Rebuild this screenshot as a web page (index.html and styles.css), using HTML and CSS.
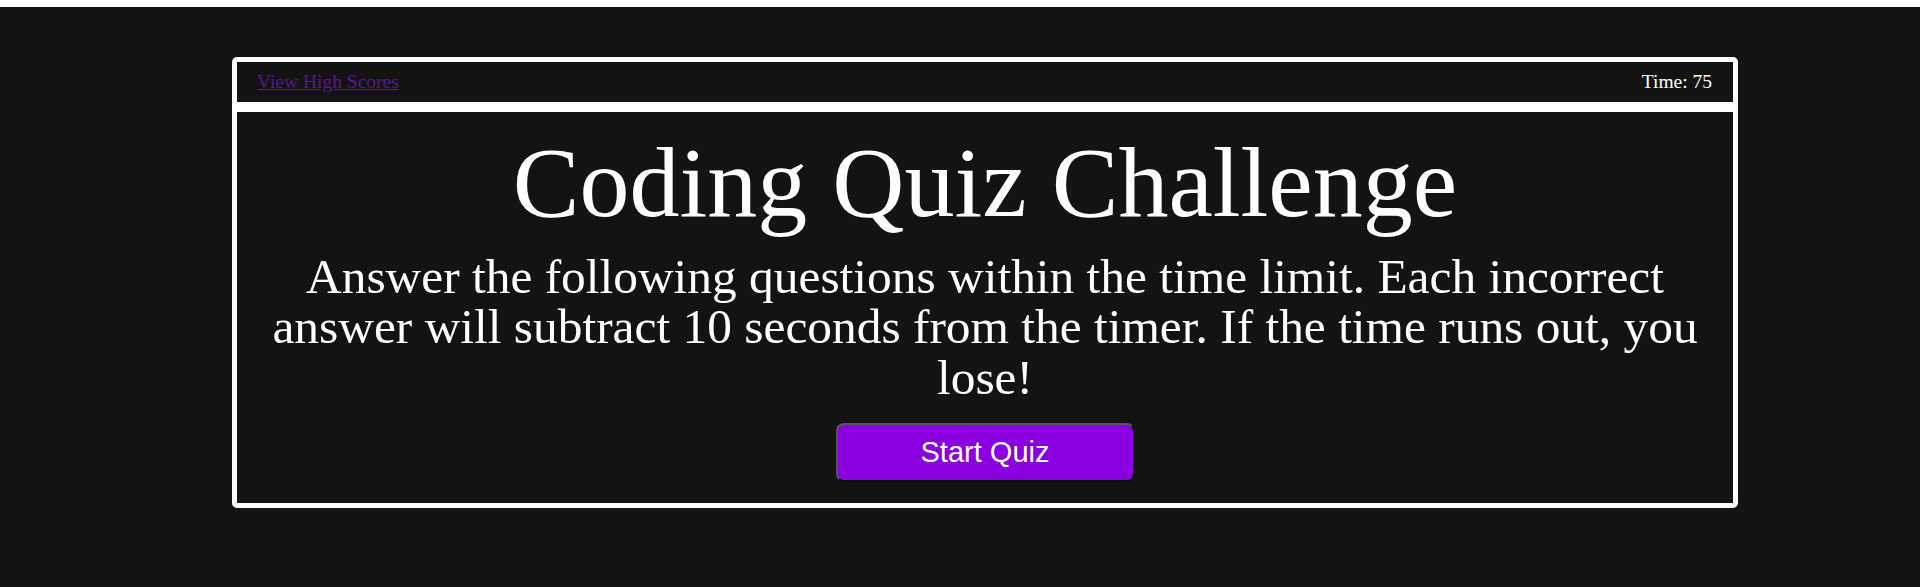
FILE: index.html
```html
<!DOCTYPE html>
<html lang="en">
<head>
<meta charset="utf-8">
<title>Coding Quiz Challenge</title>
<link rel="stylesheet" href="styles.css">
</head>
<body>
<div class="page">
  <div class="card">
    <header class="topbar">
      <a class="scores-link" href="#">View High Scores</a>
      <span class="timer">Time: 75</span>
    </header>
    <main class="content">
      <h1 class="title">Coding Quiz Challenge</h1>
      <p class="intro">Answer the following questions within the time limit. Each incorrect answer will subtract 10 seconds from the timer. If the time runs out, you lose!</p>
      <button class="start-btn" type="button">Start Quiz</button>
    </main>
  </div>
</div>
</body>
</html>
```

FILE: styles.css
```css
html, body {
  margin: 0;
  padding: 0;
  background: #ffffff;
}

.page {
  margin-top: 7px;
  min-height: calc(100vh - 7px);
  box-sizing: border-box;
  background: #131313;
  padding: 50px 182px 0 232px;
  font-family: "Liberation Serif", "Times New Roman", serif;
  color: #ffffff;
}

.card {
  display: flex;
  flex-direction: column;
  gap: 10px;
  padding: 5px;
  background: #ffffff;
  border-radius: 5px;
}

.topbar {
  height: 40px;
  display: flex;
  align-items: center;
  justify-content: space-between;
  padding: 0 21px 0 20px;
  background: #131313;
  font-size: 19.5px;
}

.scores-link {
  color: #551a8b;
}

.timer {
  color: #ffffff;
}

.content {
  background: #131313;
  text-align: center;
  padding: 0 20px;
  display: flex;
  flex-direction: column;
  align-items: center;
}

.title {
  margin: 13px 0 0;
  font-size: 100px;
  font-weight: normal;
  line-height: normal;
}

.intro {
  margin: 12px 0 0;
  font-size: 49.4px;
  line-height: 50.3px;
}

.start-btn {
  margin: 20px 0 21px;
  width: 299px;
  height: 59px;
  box-sizing: border-box;
  background: #8a00e0;
  color: #ffffff;
  border: 2px solid;
  border-color: #555555 #0a0a0a #0a0a0a #555555;
  border-radius: 8px;
  font-family: "Liberation Sans", Arial, sans-serif;
  font-size: 29px;
  padding: 0;
  cursor: pointer;
}
```
